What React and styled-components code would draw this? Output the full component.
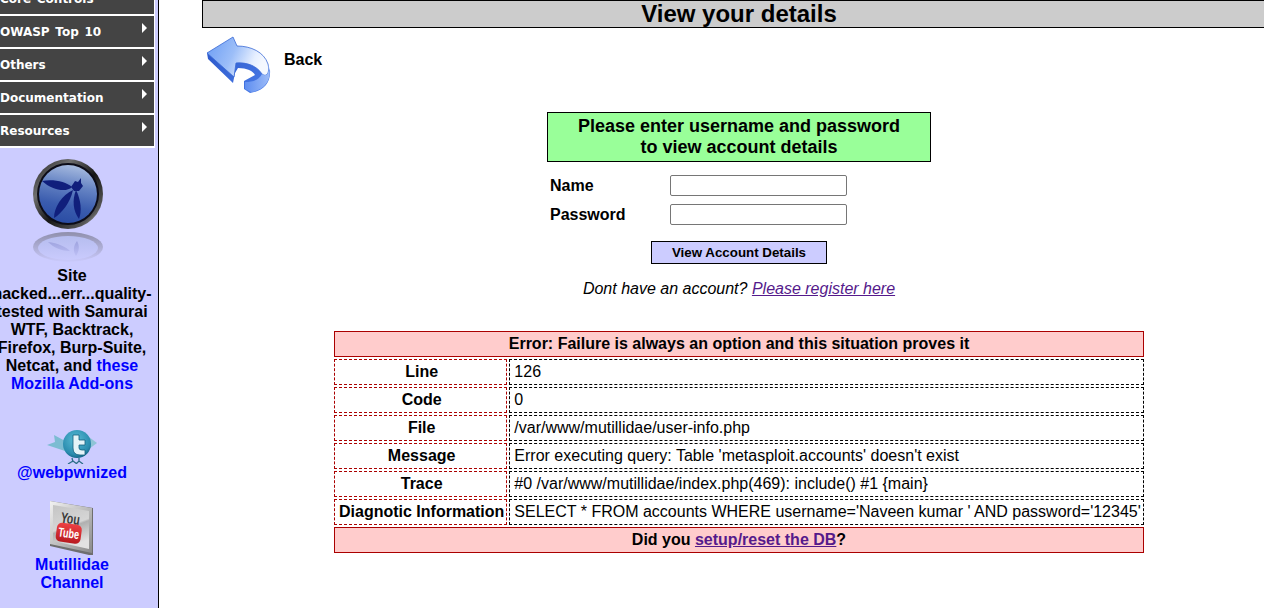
import styled, { createGlobalStyle } from "styled-components";

const GlobalStyle = createGlobalStyle`
  html, body {
    margin: 0;
    padding: 0;
    background: #fff;
    overflow: hidden;
  }
  body {
    font-family: "Liberation Sans", Arial, sans-serif;
    color: #000;
  }
`;

const menuItems = ["OWASP Top 10", "Others", "Documentation", "Resources"];

const errorRows = [
  ["Line", "126"],
  ["Code", "0"],
  ["File", "/var/www/mutillidae/user-info.php"],
  ["Message", "Error executing query: Table 'metasploit.accounts' doesn't exist"],
  ["Trace", "#0 /var/www/mutillidae/index.php(469): include() #1 {main}"],
  ["Diagnotic Information", "SELECT * FROM accounts WHERE username='Naveen kumar ' AND password='12345'"],
];

const OwaspLogo = () => (
  <svg width="72" height="104" viewBox="0 0 72 104">
    <defs>
      <linearGradient id="owRing" x1="0" y1="0" x2="1" y2="1">
        <stop offset="0" stopColor="#1c1c1c" />
        <stop offset="0.28" stopColor="#6e6e6e" />
        <stop offset="0.55" stopColor="#161616" />
        <stop offset="0.82" stopColor="#555" />
        <stop offset="1" stopColor="#e4e4e4" />
      </linearGradient>
      <linearGradient id="owFace" x1="0.6" y1="0" x2="0.4" y2="1">
        <stop offset="0" stopColor="#a8bce0" />
        <stop offset="0.35" stopColor="#6684c4" />
        <stop offset="0.7" stopColor="#3a5cae" />
        <stop offset="1" stopColor="#2a4ca4" />
      </linearGradient>
      <linearGradient id="owFade" x1="0" y1="0" x2="0" y2="1">
        <stop offset="0" stopColor="#ccf" stopOpacity="0" />
        <stop offset="1" stopColor="#ccf" />
      </linearGradient>
    </defs>
    <circle cx="36" cy="35" r="35" fill="url(#owRing)" />
    <circle cx="36" cy="35" r="31" fill="#0c0c18" />
    <circle cx="36" cy="35" r="29" fill="url(#owFace)" />
    <g fill="#101f7c">
      <path d="M10 22 C22 20 34 23 40 28 C34 34 20 31 10 22Z" />
      <path d="M41 31 C38 44 30 54 22 59 C22 48 30 36 41 31Z" />
      <path d="M44 31 C49 41 50 52 47 60 C41 52 40 41 44 31Z" />
      <path d="M39 28 L43 22 L46 23 L49 19 L49 24 L51 27 L47 32 L42 32Z" />
    </g>
    <g opacity="0.6">
      <ellipse cx="36" cy="88" rx="35" ry="15" fill="#6a6a7a" />
      <ellipse cx="36" cy="89" rx="30" ry="12" fill="#a4b0e2" />
      <path d="M16 83 C26 84 34 88 38 92 C30 92 22 89 16 83Z" fill="#6470b6" />
      <path d="M45 82 C48 87 47 92 44 97 C41 92 41 87 45 82Z" fill="#6470b6" />
    </g>
    <rect x="0" y="74" width="72" height="30" fill="url(#owFade)" />
  </svg>
);

const BackArrow = () => (
  <svg width="64" height="58" viewBox="0 0 64 58">
    <defs>
      <linearGradient id="arrowTop" x1="0" y1="0" x2="1" y2="0.3">
        <stop offset="0" stopColor="#6a9cf4" />
        <stop offset="0.5" stopColor="#9cbef8" />
        <stop offset="0.85" stopColor="#e6efff" />
        <stop offset="1" stopColor="#f4f8ff" />
      </linearGradient>
      <linearGradient id="arrowSide" x1="0" y1="0" x2="1" y2="1">
        <stop offset="0" stopColor="#2a56c8" />
        <stop offset="1" stopColor="#4c7eea" />
      </linearGradient>
      <linearGradient id="arrowHook" x1="0" y1="0" x2="1" y2="0">
        <stop offset="0" stopColor="#5f8ef0" />
        <stop offset="1" stopColor="#9dbcf8" />
      </linearGradient>
    </defs>
    <path d="M0 17 L1 23 L26 47 L28 37 L31 32 C40 32 46 35 48 39 L37 45 L37 53 L43 57 C56 55 64 47 63 34 L30 10 Z" fill="url(#arrowSide)" />
    <path d="M0 17 L26 1 L30 10 C44 10 57 16 61 28 C63 36 60 42 55 38 C50 30 40 26 29 27 L27 41 Z" fill="url(#arrowTop)" stroke="#3a6ad6" strokeWidth="0.8" />
    <path d="M55 38 C60 42 63 36 61 28 C66 40 60 54 44 56 L38 53 L38 46 C46 46 52 44 55 38Z" fill="url(#arrowHook)" />
  </svg>
);

const TwitterBird = () => (
  <svg width="50" height="34" viewBox="0 0 50 34">
    <defs>
      <radialGradient id="birdBody" cx="0.45" cy="0.35" r="0.7">
        <stop offset="0" stopColor="#58bcd6" />
        <stop offset="0.75" stopColor="#2a8cae" />
        <stop offset="1" stopColor="#0f5a7c" />
      </radialGradient>
    </defs>
    <path d="M0 15 L8 12 L7 5 L20 12 L18 21 Z" fill="#7cbcd2" />
    <path d="M42 7 L50 13 L42 19 Z" fill="#8ec4d6" />
    <circle cx="30" cy="14" r="14" fill="url(#birdBody)" />
    <path d="M26 5 H32 V10 H38 V15 H32 V18 Q32 20 35 20 H38 V25 H33 Q26 25 26 18 Z" fill="#e4f4f8" stroke="#14607e" strokeWidth="0.8" />
    <path d="M25 28 L26 32 M21 34 L26 31 L30 34 M32 28 L32 32 M29 34 L32 31 L36 34" stroke="#2c6e88" strokeWidth="1.3" fill="none" />
  </svg>
);

const YoutubeIcon = () => (
  <svg width="46" height="56" viewBox="0 0 46 56">
    <defs>
      <linearGradient id="ytFrame" x1="0" y1="0" x2="1" y2="1">
        <stop offset="0" stopColor="#f2f2f2" />
        <stop offset="1" stopColor="#8a8a8a" />
      </linearGradient>
      <linearGradient id="ytFace" x1="0" y1="0" x2="0.3" y2="1">
        <stop offset="0" stopColor="#c4c4c4" />
        <stop offset="0.55" stopColor="#d6d6d6" />
        <stop offset="0.6" stopColor="#b0b0b0" />
        <stop offset="1" stopColor="#e2e2e2" />
      </linearGradient>
      <linearGradient id="ytRed" x1="0" y1="0" x2="0" y2="1">
        <stop offset="0" stopColor="#ee4044" />
        <stop offset="1" stopColor="#b81a20" />
      </linearGradient>
    </defs>
    <path d="M1 1 L44 8 V55 L40 55 L1 46 Z" fill="#6e6e6e" />
    <path d="M1 1 L43 8 V53 L1 44 Z" fill="url(#ytFrame)" />
    <path d="M4 5 L40 11 V49 L4 41 Z" fill="url(#ytFace)" />
    <g transform="rotate(8 22 28)">
      <text x="20" y="24" fontFamily="Liberation Sans, sans-serif" fontSize="15" fontWeight="700" fill="#3a3a3a" textAnchor="middle" textLength="19" lengthAdjust="spacingAndGlyphs">You</text>
      <rect x="8" y="24" width="25" height="19" rx="5" fill="url(#ytRed)" />
      <text x="20.5" y="38" fontFamily="Liberation Sans, sans-serif" fontSize="13" fontWeight="700" fill="#fff" textAnchor="middle" textLength="21" lengthAdjust="spacingAndGlyphs">Tube</text>
    </g>
  </svg>
);

const App = () => (
  <>
    <GlobalStyle />
    <Page>
      <Sidebar>
        <Menu>
          <MenuItem>Core Controls</MenuItem>
          {menuItems.map((item) => (
            <MenuItem key={item}>{item}</MenuItem>
          ))}
        </Menu>
        <LogoWrap>
          <OwaspLogo />
        </LogoWrap>
        <Blurb>
          Site hacked...err...quality-tested with Samurai WTF, Backtrack, Firefox, Burp-Suite, Netcat, and{" "}
          <SideLink href="#">these Mozilla Add-ons</SideLink>
        </Blurb>
        <Social $top={37}>
          <TwitterBird />
          <SideLink href="#">@webpwnized</SideLink>
        </Social>
        <Social $top={18}>
          <YoutubeIcon />
          <SideLink href="#">Mutillidae Channel</SideLink>
        </Social>
      </Sidebar>
      <Main>
        <TitleBar>View your details</TitleBar>
        <BackRow>
          <BackArrow />
          <BackLabel>Back</BackLabel>
        </BackRow>
        <FormBlock>
          <Notice>
            Please enter username and password
            <br />
            to view account details
          </Notice>
          <Field>
            <FieldLabel>Name</FieldLabel>
            <TextInput type="text" />
          </Field>
          <Field>
            <FieldLabel>Password</FieldLabel>
            <TextInput type="password" />
          </Field>
          <SubmitButton type="button">View Account Details</SubmitButton>
        </FormBlock>
        <Register>
          Dont have an account? <RegisterLink href="#">Please register here</RegisterLink>
        </Register>
        <ErrorTable>
          <tbody>
            <tr>
              <Banner colSpan={2}>Error: Failure is always an option and this situation proves it</Banner>
            </tr>
            {errorRows.map(([label, value]) => (
              <tr key={label}>
                <LabelCell>{label}</LabelCell>
                <ValueCell>{value}</ValueCell>
              </tr>
            ))}
            <tr>
              <Banner colSpan={2}>
                Did you <RegisterLink href="#">setup/reset the DB</RegisterLink>?
              </Banner>
            </tr>
          </tbody>
        </ErrorTable>
      </Main>
    </Page>
  </>
);

const Page = styled.div`
  display: flex;
  width: 1264px;
  height: 608px;
  overflow: hidden;
`;

const Sidebar = styled.aside`
  flex: none;
  box-sizing: border-box;
  width: 173px;
  margin-left: -14px;
  height: 608px;
  background: #ccf;
  border-right: 1px solid #000;
  text-align: center;
  font-size: 16px;
  font-weight: 700;
`;

const Menu = styled.div`
  display: flex;
  flex-direction: column;
  gap: 2px;
  margin: -17px 3px 0 0;
  padding: 0 1px 2px 0;
  background: #fff;
`;

const MenuItem = styled.div`
  position: relative;
  box-sizing: border-box;
  height: 31px;
  padding-left: 14px;
  background: #444;
  color: #fff;
  font: 700 12px/33px "DejaVu Sans", Verdana, sans-serif;
  word-spacing: 1.5px;
  text-align: left;
  &::after {
    content: "";
    position: absolute;
    top: 7px;
    right: 7px;
    border-left: 5px solid #fff;
    border-top: 5px solid transparent;
    border-bottom: 5px solid transparent;
  }
`;

const LogoWrap = styled.div`
  display: flex;
  justify-content: center;
  padding: 11px 8px 0 0;
  height: 104px;
`;

const Blurb = styled.div`
  line-height: 18px;
  margin-top: 4px;
  padding: 0 2px;
`;

const SideLink = styled.a`
  color: #00f;
  text-decoration: none;
`;

const Social = styled.div`
  display: flex;
  flex-direction: column;
  align-items: center;
  line-height: 18px;
  margin-top: ${(p) => p.$top}px;
  padding: 0 30px;
`;

const Main = styled.main`
  flex: none;
  box-sizing: border-box;
  width: 1074px;
  margin-left: 43px;
  text-align: center;
`;

const TitleBar = styled.h1`
  box-sizing: border-box;
  height: 28px;
  margin: 0;
  background: #ccc;
  border: 1px solid #000;
  font-size: 24px;
  line-height: 25px;
  font-weight: 700;
`;

const BackRow = styled.div`
  display: flex;
  align-items: flex-start;
  gap: 13px;
  margin-top: 8px;
  padding-left: 5px;
  height: 76px;
`;

const BackLabel = styled.span`
  font-size: 16px;
  font-weight: 700;
  line-height: 18px;
  margin-top: 15px;
`;

const FormBlock = styled.form`
  display: flex;
  flex-direction: column;
  align-items: center;
`;

const Notice = styled.div`
  box-sizing: border-box;
  width: 384px;
  height: 50px;
  background: #9f9;
  border: 1px solid #000;
  font-size: 18px;
  line-height: 21px;
  font-weight: 700;
  padding-top: 3px;
`;

const Field = styled.label`
  display: grid;
  grid-template-columns: 120px 177px;
  width: 384px;
  padding-left: 3px;
  box-sizing: border-box;
  height: 29px;
  align-items: center;
  text-align: left;
  &:first-of-type {
    margin-top: 9px;
  }
`;

const FieldLabel = styled.span`
  font-size: 16px;
  font-weight: 700;
`;

const TextInput = styled.input`
  box-sizing: border-box;
  width: 177px;
  height: 21px;
  padding: 1px 2px;
  background: #fff;
  border: 1px solid #767676;
  border-radius: 2px;
`;

const SubmitButton = styled.button`
  box-sizing: border-box;
  width: 176px;
  height: 23px;
  margin-top: 12px;
  padding: 0;
  background: #ccf;
  border: 1px solid #000;
  font: 700 13.33px "Liberation Sans", Arial, sans-serif;
  color: #000;
`;

const Register = styled.p`
  margin: 16px 0 0;
  font-size: 16px;
  font-style: italic;
  line-height: 18px;
`;

const RegisterLink = styled.a`
  color: #551a8b;
  text-decoration: underline;
`;

const ErrorTable = styled.table`
  width: 814px;
  margin: 31px auto 0;
  border-collapse: separate;
  border-spacing: 2px;
  font-size: 16px;
  line-height: 18px;
`;

const Banner = styled.th`
  height: 26px;
  box-sizing: border-box;
  padding: 0;
  background: #fcc;
  border: 1px solid #a00;
  font-weight: 700;
`;

const LabelCell = styled.th`
  box-sizing: border-box;
  width: 173px;
  height: 26px;
  padding: 0 2px 0 4px;
  border: 1px dashed #a00;
  font-weight: 700;
  white-space: nowrap;
`;

const ValueCell = styled.td`
  box-sizing: border-box;
  height: 26px;
  padding: 0 2px 0 4px;
  border: 1px dashed #000;
  text-align: left;
  white-space: nowrap;
`;

export default App;
